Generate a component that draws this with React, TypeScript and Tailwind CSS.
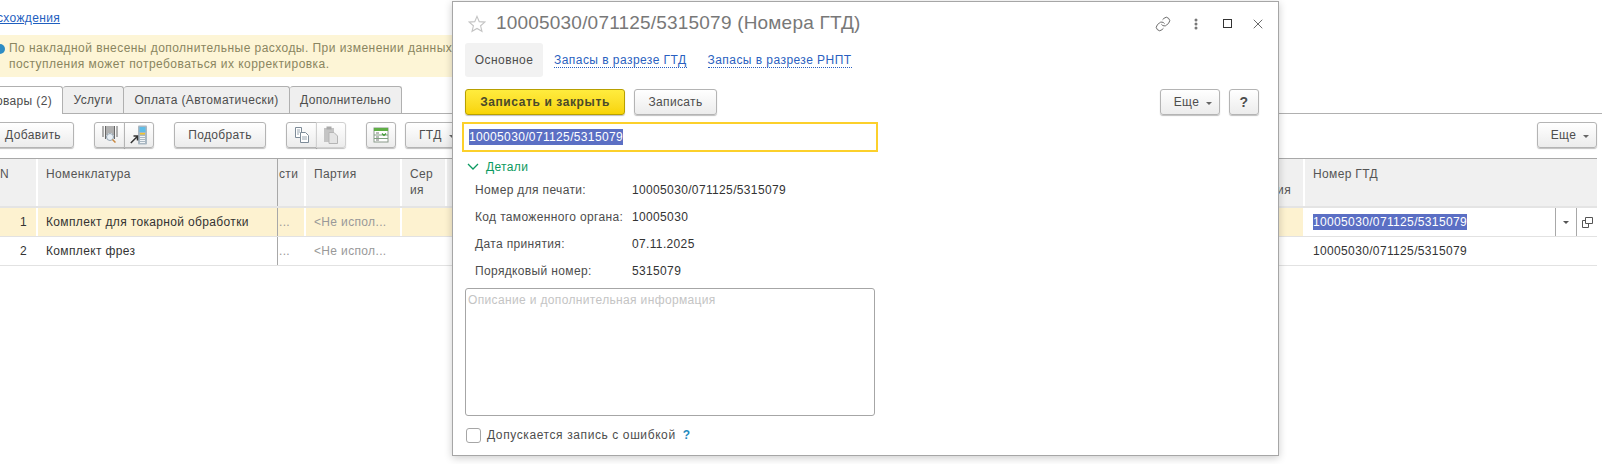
import { Link, X } from "lucide-react";
import type { ReactNode } from "react";

function Btn({ className = "", children }: { className?: string; children: ReactNode }) {
  return (
    <div
      className={`flex h-[26px] items-center justify-center rounded-[3px] border border-[#b4b4b4] bg-gradient-to-b from-white to-[#ececec] text-[#4d4d4d] shadow-[0_1px_1px_rgba(0,0,0,0.25)] ${className}`}
    >
      {children}
    </div>
  );
}

function Caret() {
  return <span className="ml-[7px] mt-[2px] h-0 w-0 border-x-[3px] border-t-[3px] border-x-transparent border-t-[#666]" />;
}

function BarcodeIcon() {
  return (
    <svg width="16" height="18" viewBox="0 0 16 18" fill="none">
      <path d="M1 0v11M3.500 0v13M5 0v9M7 0v7M9 0v7M11 0v9M12.500 0v13M15 0v11" stroke="#666" />
      <circle cx="8" cy="11" r="3.500" fill="#e8eff5" stroke="#93a3b0" />
      <path d="M10.500 13.500l3 3" stroke="#c9873f" strokeWidth="1.500" />
    </svg>
  );
}

function ScannerIcon() {
  return (
    <svg width="18" height="20" viewBox="0 0 18 20" fill="none">
      <rect x="8" y="0.500" width="9" height="19" rx="1" fill="#a9b7c2" />
      <rect x="9.500" y="2" width="6" height="5" fill="#5fbde8" />
      <rect x="10" y="8" width="5" height="1.500" fill="#f2c530" />
      <path d="M10 11.500h5M10 13.500h5M10 15.500h5M10 17.500h5" stroke="#f0f3f5" />
      <path d="M0.800 18l6-6M3.500 11h4v4.500" stroke="#333" strokeWidth="1.500" />
    </svg>
  );
}

function CopyDocsIcon() {
  return (
    <svg width="16" height="16" viewBox="0 0 16 16" fill="none">
      <path d="M1.500 0.500h6v10h-6z" fill="#fff" stroke="#7d8b98" />
      <path d="M6.500 5.500h5l3 3v7h-8z" fill="#fff" stroke="#7d8b98" />
      <path d="M3 3h3M3 5h3M3 7h2M8 10h5M8 12h5" stroke="#98a5b0" />
    </svg>
  );
}

function PasteIcon() {
  return (
    <svg width="16" height="18" viewBox="0 0 16 18" fill="none">
      <rect x="1" y="2" width="10" height="14" fill="#c4c4c4" />
      <rect x="3.500" y="0.500" width="5" height="3" fill="#a9a9a9" />
      <path d="M6 6.500h5l3.500 3.500v7.500H6z" fill="#e4e4e4" stroke="#b5b5b5" />
    </svg>
  );
}

function TableIcon() {
  return (
    <svg width="16" height="16" viewBox="0 0 16 16" fill="none">
      <rect x="1" y="1" width="14" height="14" fill="#fff" stroke="#8a9a8a" />
      <rect x="1" y="1" width="14" height="3" fill="#5fae45" />
      <path d="M1 8h14M1 11.500h14" stroke="#7fa07f" />
      <path d="M3 6h3M3 10h3M3 13h3" stroke="#777" />
      <path d="M9 6.500l2 2 2-2" stroke="#3f9a33" strokeWidth="1.200" />
    </svg>
  );
}

function OpenIcon() {
  return (
    <svg width="13" height="13" viewBox="0 0 13 13" fill="none">
      <path d="M4.500 1.500h7v6h-7z" stroke="#555" />
      <path d="M4.500 4.500h-3v7h6v-4" stroke="#555" />
    </svg>
  );
}

function Detail({ label, value }: { label: string; value: string }) {
  return (
    <div className="flex h-[27px] items-center">
      <div className="w-[157px] shrink-0 whitespace-nowrap text-[#4d4d4d]">{label}</div>
      <div className="text-[#333]">{value}</div>
    </div>
  );
}

function HeadCell({ className = "", children }: { className?: string; children?: ReactNode }) {
  return <div className={`shrink-0 border-r-2 border-white bg-[#f0f0f0] px-[8px] pt-[7px] leading-[16px] text-[#555] ${className}`}>{children}</div>;
}

function Row({ selected, num, name, last }: { selected?: boolean; num: string; name: string; last: ReactNode }) {
  const bg = selected ? "bg-[#fdf2d0]" : "bg-white";
  return (
    <div className="flex h-[29px] border-b border-[#e2e2e2]">
      <div className={`w-[38px] shrink-0 border-r-2 border-white pr-[9px] pt-[5px] text-right text-[#333] ${bg}`}>{num}</div>
      <div className={`w-[240px] shrink-0 border-r border-[#a8a8a8] pl-[8px] pt-[5px] text-[#333] ${bg}`}>{name}</div>
      <div className={`w-[28px] shrink-0 border-r-2 border-white pl-[1px] pt-[5px] text-[#999] ${bg}`}>...</div>
      <div className={`w-[96px] shrink-0 overflow-hidden whitespace-nowrap border-r-2 border-white pl-[8px] pt-[5px] text-[#999] ${bg}`}>&lt;Не испол...</div>
      <div className={`flex-1 border-r-2 border-white ${bg}`} />
      {last}
    </div>
  );
}

export default function App() {
  return (
    <div className="relative h-[464px] w-[1602px] overflow-hidden bg-white text-[12px] tracking-[0.35px] [font-family:'Liberation_Sans',Arial,sans-serif]">
      {/* Background form */}
      <div className="h-[35px] pt-[10px] leading-[16px]">
        <a className="ml-[-18px] text-[#1f5fbf] underline">Расхождения</a>
      </div>
      <div className="flex h-[42px] w-[700px] items-start bg-[#fdf5d6] pt-[5px] leading-[16px] tracking-[0.45px] text-[#8a8560]">
        <span className="ml-[-5px] mt-[4px] h-[10px] w-[10px] shrink-0 rounded-full bg-[#2d8cc4]" />
        <div className="ml-[4px]">
          <div className="whitespace-nowrap">По накладной внесены дополнительные расходы. При изменении данных</div>
          <div>поступления может потребоваться их корректировка.</div>
        </div>
      </div>

      <div className="mt-[9px] flex h-[28px] items-end border-b border-[#b0b0b0] text-[#4d4d4d]">
        <div className="relative z-10 mb-[-1px] flex h-[28px] w-[63px] items-center justify-end rounded-tr-[3px] border-r border-t border-[#b0b0b0] bg-white pr-[10px]">
          <span className="whitespace-nowrap">Товары (2)</span>
        </div>
        <div className="flex h-[27px] w-[61px] items-center justify-center rounded-t-[3px] border-r border-t border-[#b0b0b0] bg-[#efefef]">Услуги</div>
        <div className="flex h-[27px] w-[166px] items-center justify-center rounded-t-[3px] border-r border-t border-[#b0b0b0] bg-[#efefef]">Оплата (Автоматически)</div>
        <div className="flex h-[27px] w-[112px] items-center justify-center rounded-t-[3px] border-r border-t border-[#b0b0b0] bg-[#efefef]">Дополнительно</div>
      </div>

      <div className="mt-[8px] flex h-[27px] items-start pr-[5px]">
        <Btn className="ml-[-8px] w-[82px]">Добавить</Btn>
        <div className="ml-[20px] flex">
          <Btn className="w-[31px] rounded-r-none"><BarcodeIcon /></Btn>
          <Btn className="ml-[-1px] w-[30px] rounded-l-none"><ScannerIcon /></Btn>
        </div>
        <Btn className="ml-[20px] w-[92px]">Подобрать</Btn>
        <div className="ml-[20px] flex">
          <Btn className="w-[31px] rounded-r-none"><CopyDocsIcon /></Btn>
          <Btn className="ml-[-1px] w-[30px] rounded-l-none border-[#d0d0d0]"><PasteIcon /></Btn>
        </div>
        <Btn className="ml-[20px] w-[30px]"><TableIcon /></Btn>
        <Btn className="ml-[9px] w-[80px] !justify-start pl-[13px]">ГТД<Caret /></Btn>
        <Btn className="ml-auto w-[60px] pl-[6px]">Еще<Caret /></Btn>
      </div>

      <div className="mr-[5px] mt-[9px] border-t border-[#a8a8a8]">
        <div className="flex h-[49px] border-b-2 border-[#e4e4e4]">
          <HeadCell className="w-[38px] pl-0">N</HeadCell>
          <HeadCell className="w-[240px] !border-r !border-[#a8a8a8]">Номенклатура</HeadCell>
          <HeadCell className="w-[28px] !pl-[1px]">сти</HeadCell>
          <HeadCell className="w-[96px]">Партия</HeadCell>
          <HeadCell className="w-[45px]">Сер<br />ия</HeadCell>
          <HeadCell className="flex-1 shrink text-right !pr-[12px]"><br />ия</HeadCell>
          <HeadCell className="w-[292px] !border-r-0">Номер ГТД</HeadCell>
        </div>
        <Row
          selected
          num="1"
          name="Комплект для токарной обработки"
          last={
            <div className="flex w-[292px] shrink-0 items-stretch bg-white">
              <div className="flex-1 pl-[8px] pt-[5px]">
                <span className="inline-block bg-[#5b6fc4] leading-[16px] text-white">10005030/071125/5315079</span>
              </div>
              <div className="flex w-[21px] items-center justify-center border-l border-[#a8a8a8]"><span className="h-0 w-0 border-x-[3px] border-t-[3px] border-x-transparent border-t-[#555]" /></div>
              <div className="flex w-[21px] items-center justify-center border-l border-[#a8a8a8]"><OpenIcon /></div>
            </div>
          }
        />
        <Row
          num="2"
          name="Комплект фрез"
          last={<div className="w-[292px] shrink-0 pl-[8px] pt-[5px] text-[#333]">10005030/071125/5315079</div>}
        />
      </div>

      {/* Dialog */}
      <div className="absolute left-[452px] top-px flex h-[455px] w-[827px] flex-col border border-[#a6a6a6] bg-white px-[12px] shadow-[0_2px_8px_rgba(0,0,0,0.2)]">
        <div className="flex h-[41px] items-center pt-[2px]">
          <svg width="18" height="18" viewBox="0 0 16 16" fill="none" className="ml-[3px]">
            <path d="M8 1.200l2 4.700 5 .4-3.800 3.300 1.200 4.900L8 12l-4.400 2.500 1.200-4.900L1 6.300l5-.4z" stroke="#c4c4c4" />
          </svg>
          <div className="ml-[10px] text-[19px] tracking-[0.2px] text-[#787878]">10005030/071125/5315079 (Номера ГТД)</div>
          <div className="ml-auto flex items-center text-[#555]">
            <Link size={16} strokeWidth={1.300} />
            <svg width="4" height="12" viewBox="0 0 4 12" className="ml-[23px] fill-[#777]"><circle cx="2" cy="2" r="1.500" /><circle cx="2" cy="6" r="1.500" /><circle cx="2" cy="10" r="1.500" /></svg>
            <span className="ml-[25px] h-[9px] w-[9px] border border-[#333]" />
            <X size={16} strokeWidth={1.200} className="ml-[18px] text-[#444]" />
          </div>
        </div>
        <div className="flex h-[34px] items-center tracking-[0.45px]">
          <div className="flex h-[34px] w-[78px] items-center justify-center rounded-[3px] bg-[#f2f2f2] text-[#4d4d4d]">Основное</div>
          <a className="ml-[11px] border-b border-dotted border-[#2a5fc0] leading-[14px] text-[#2a5fc0]">Запасы в разрезе ГТД</a>
          <a className="ml-[21px] border-b border-dotted border-[#2a5fc0] leading-[14px] text-[#2a5fc0]">Запасы в разрезе РНПТ</a>
        </div>
        <div className="mt-[12px] flex items-start pr-[7px]">
          <Btn className="w-[160px] border-[#b8a000] !from-[#ffec3d] !to-[#f8d400] font-bold tracking-[0.6px] !text-[#4a4a2a]">Записать и закрыть</Btn>
          <Btn className="ml-[9px] w-[83px]">Записать</Btn>
          <Btn className="ml-auto w-[60px] pl-[6px]">Еще<Caret /></Btn>
          <Btn className="ml-[9px] w-[30px] text-[14px] font-bold">?</Btn>
        </div>
        <div className="mx-[-3px] mt-[7px] flex h-[30px] w-[416px] items-center border-2 border-[#fcd02b] pl-[5px]">
          <span className="bg-[#5b6fc4] leading-[16px] text-white">10005030/071125/5315079</span>
        </div>
        <div className="flex h-[25px] items-center pt-[5px] text-[#0a9a60]">
          <svg width="12" height="8" viewBox="0 0 12 8" fill="none" className="ml-[2px]"><path d="M1 1l5 5 5-5" stroke="#0a9a60" strokeWidth="1.300" /></svg>
          <span className="ml-[7px]">Детали</span>
        </div>
        <div className="ml-[10px] -mt-[1px]">
          <Detail label="Номер для печати:" value="10005030/071125/5315079" />
          <Detail label="Код таможенного органа:" value="10005030" />
          <Detail label="Дата принятия:" value="07.11.2025" />
          <Detail label="Порядковый номер:" value="5315079" />
        </div>
        <div className="mt-[4px] h-[128px] w-[410px] rounded-[3px] border border-[#a6a6a6] pl-[2px] pt-[2px] text-[#c4c4c4]">Описание и дополнительная информация</div>
        <div className="mt-[10px] flex items-center">
          <span className="ml-px h-[15px] w-[15px] rounded-[3px] border border-[#a6a6a6]" />
          <span className="ml-[6px] tracking-[0.6px] text-[#4d4d4d]">Допускается запись с ошибкой</span>
          <span className="ml-[7px] font-bold text-[#1f8ac0]">?</span>
        </div>
      </div>
    </div>
  );
}
